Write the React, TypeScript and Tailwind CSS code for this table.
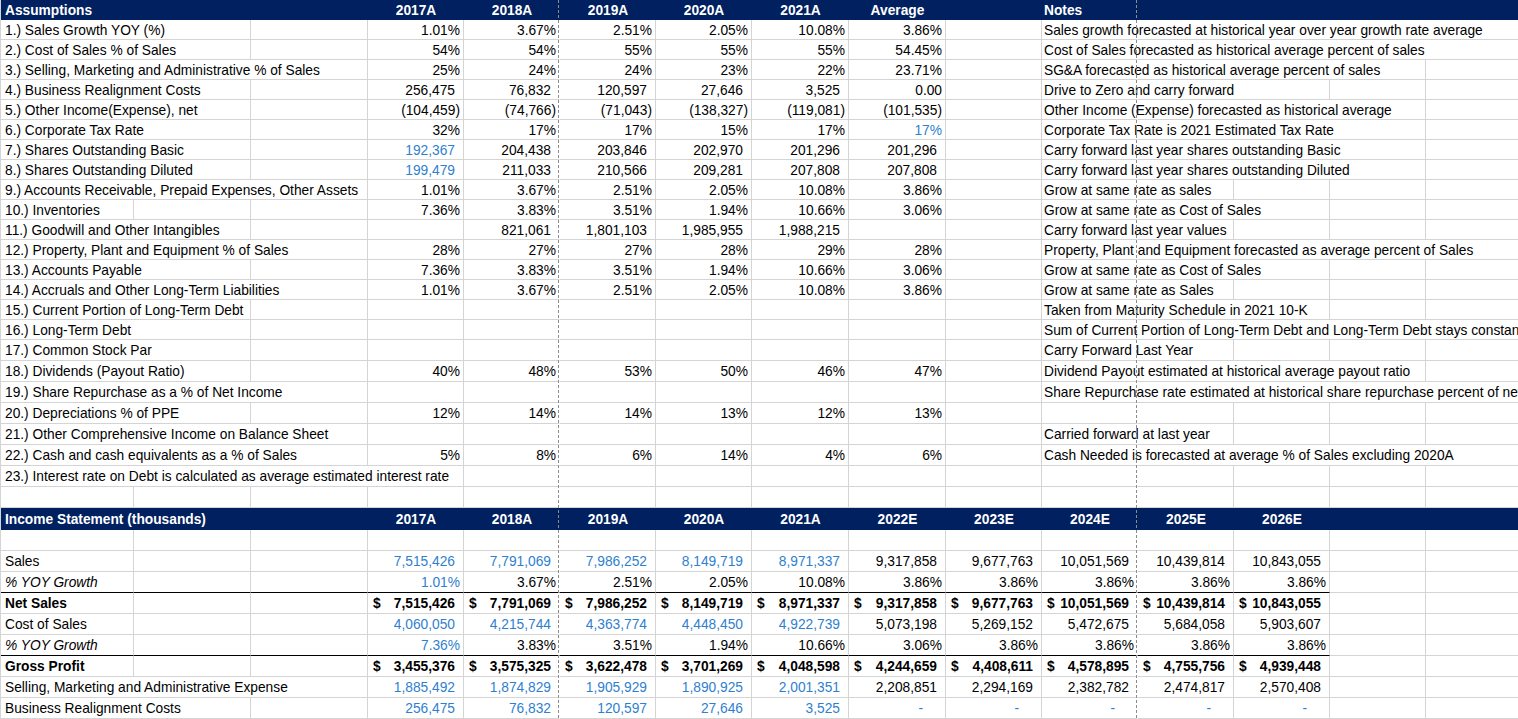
import React from 'react';

// Excel-like sheet: Assumptions block + Income Statement block
const GRID =
  'grid grid-cols-[133px_117px_117px_96px_96px_96px_96px_97px_97px_96px_96px_96px_96px_96px_96px]';
const NCOL = 15;
const BLUE = 'text-[#2f7fcf]';

type Row = { label: string; vals: string[]; note: string; tall?: boolean };

const assumptions: Row[] = [
  { label: '1.) Sales Growth YOY (%)', vals: ['1.01%', '3.67%', '2.51%', '2.05%', '10.08%', '3.86%'], note: 'Sales growth forecasted at historical year over year growth rate average' },
  { label: '2.) Cost of Sales % of Sales', vals: ['54%', '54%', '55%', '55%', '55%', '54.45%'], note: 'Cost of Sales forecasted as historical average percent of sales' },
  { label: '3.) Selling, Marketing and Administrative % of Sales', vals: ['25%', '24%', '24%', '23%', '22%', '23.71%'], note: 'SG&A forecasted as historical average percent of sales' },
  { label: '4.) Business Realignment Costs', vals: ['256,475', '76,832', '120,597', '27,646', '3,525', '0.00'], note: 'Drive to Zero and carry forward' },
  { label: '5.) Other Income(Expense), net', vals: ['(104,459)', '(74,766)', '(71,043)', '(138,327)', '(119,081)', '(101,535)'], note: 'Other Income (Expense) forecasted as historical average' },
  { label: '6.) Corporate Tax Rate', vals: ['32%', '17%', '17%', '15%', '17%', '*17%'], note: 'Corporate Tax Rate is 2021 Estimated Tax Rate' },
  { label: '7.) Shares Outstanding Basic', vals: ['*192,367', '204,438', '203,846', '202,970', '201,296', '201,296'], note: 'Carry forward last year shares outstanding Basic' },
  { label: '8.) Shares Outstanding Diluted', vals: ['*199,479', '211,033', '210,566', '209,281', '207,808', '207,808'], note: 'Carry forward last year shares outstanding Diluted' },
  { label: '9.) Accounts Receivable, Prepaid Expenses, Other Assets', vals: ['1.01%', '3.67%', '2.51%', '2.05%', '10.08%', '3.86%'], note: 'Grow at same rate as sales' },
  { label: '10.) Inventories', vals: ['7.36%', '3.83%', '3.51%', '1.94%', '10.66%', '3.06%'], note: 'Grow at same rate as Cost of Sales' },
  { label: '11.) Goodwill and Other Intangibles', vals: ['', '821,061', '1,801,103', '1,985,955', '1,988,215', ''], note: 'Carry forward last year values' },
  { label: '12.) Property, Plant and Equipment % of Sales', vals: ['28%', '27%', '27%', '28%', '29%', '28%'], note: 'Property, Plant and Equipment forecasted as average percent of Sales' },
  { label: '13.) Accounts Payable', vals: ['7.36%', '3.83%', '3.51%', '1.94%', '10.66%', '3.06%'], note: 'Grow at same rate as Cost of Sales' },
  { label: '14.) Accruals and Other Long-Term Liabilities', vals: ['1.01%', '3.67%', '2.51%', '2.05%', '10.08%', '3.86%'], note: 'Grow at same rate as Sales' },
  { label: '15.) Current Portion of Long-Term Debt', vals: [], note: 'Taken from Maturity Schedule in 2021 10-K' },
  { label: '16.) Long-Term Debt', vals: [], note: 'Sum of Current Portion of Long-Term Debt and Long-Term Debt stays constant' },
  { label: '17.) Common Stock Par', vals: [], note: 'Carry Forward Last Year', tall: true },
  { label: '18.) Dividends (Payout Ratio)', vals: ['40%', '48%', '53%', '50%', '46%', '47%'], note: 'Dividend Payout estimated at historical average payout ratio', tall: true },
  { label: '19.) Share Repurchase as a % of Net Income', vals: [], note: 'Share Repurchase rate estimated at historical share repurchase percent of net income', tall: true },
  { label: '20.) Depreciations % of PPE', vals: ['12%', '14%', '14%', '13%', '12%', '13%'], note: '', tall: true },
  { label: '21.) Other Comprehensive Income on Balance Sheet', vals: [], note: 'Carried forward at last year', tall: true },
  { label: '22.) Cash and cash equivalents as a % of Sales', vals: ['5%', '8%', '6%', '14%', '4%', '6%'], note: 'Cash Needed is forecasted at average % of Sales excluding 2020A', tall: true },
  { label: '23.) Interest rate on Debt is calculated as average estimated interest rate', vals: [], note: '', tall: true },
];

type IsRow = {
  label: string;
  vals: string[];
  blue: number; // how many leading values are hard-coded (blue)
  italic?: boolean;
  bold?: boolean;
  line?: boolean;
};

const income: IsRow[] = [
  { label: 'Sales', vals: ['7,515,426', '7,791,069', '7,986,252', '8,149,719', '8,971,337', '9,317,858', '9,677,763', '10,051,569', '10,439,814', '10,843,055'], blue: 5 },
  { label: '% YOY Growth', vals: ['1.01%', '3.67%', '2.51%', '2.05%', '10.08%', '3.86%', '3.86%', '3.86%', '3.86%', '3.86%'], blue: 1, italic: true, line: true },
  { label: 'Net Sales', vals: ['7,515,426', '7,791,069', '7,986,252', '8,149,719', '8,971,337', '9,317,858', '9,677,763', '10,051,569', '10,439,814', '10,843,055'], blue: 0, bold: true },
  { label: 'Cost of Sales', vals: ['4,060,050', '4,215,744', '4,363,774', '4,448,450', '4,922,739', '5,073,198', '5,269,152', '5,472,675', '5,684,058', '5,903,607'], blue: 5 },
  { label: '% YOY Growth', vals: ['7.36%', '3.83%', '3.51%', '1.94%', '10.66%', '3.06%', '3.86%', '3.86%', '3.86%', '3.86%'], blue: 1, italic: true, line: true },
  { label: 'Gross Profit', vals: ['3,455,376', '3,575,325', '3,622,478', '3,701,269', '4,048,598', '4,244,659', '4,408,611', '4,578,895', '4,755,756', '4,939,448'], blue: 0, bold: true },
  { label: 'Selling, Marketing and Administrative Expense', vals: ['1,885,492', '1,874,829', '1,905,929', '1,890,925', '2,001,351', '2,208,851', '2,294,169', '2,382,782', '2,474,817', '2,570,408'], blue: 5 },
  { label: 'Business Realignment Costs', vals: ['256,475', '76,832', '120,597', '27,646', '3,525', '-', '-', '-', '-', '-'], blue: 10 },
];

// right padding depends on the number format (accounting space for ")")
const padFor = (v: string) => {
  if (v === '-') return 'pr-[22px]';
  if (v.endsWith('%') || v.endsWith(')') || v === '0.00') return 'pr-[3px]';
  return 'pr-[8px]';
};

// page-break columns draw no gridline of their own
const edge = (i: number) => (i === 4 || i === 10 ? 'border-r-transparent' : '');

function Overflow({ text, pad, className = '' }: { text: string; pad: string; className?: string }) {
  return (
    <span className={`relative z-10 h-full flex items-center whitespace-nowrap bg-white pt-[2px] pr-[3px] ${pad} ${className}`}>
      {text}
    </span>
  );
}

function HeaderRow({ title, cols, h, notes }: { title: string; cols: string[]; h: string; notes?: string }) {
  return (
    <div className={`${GRID} ${h} bg-[#002060] font-bold text-white`}>
      <div className="col-span-3 flex items-center pt-[2px] pl-[4px] whitespace-nowrap">{title}</div>
      {cols.map((c) => (
        <div key={c} className="flex items-center justify-center pt-[2px]">
          {c}
        </div>
      ))}
      {notes !== undefined && (
        <>
          {Array.from({ length: 10 - 3 - cols.length }).map((_, i) => (
            <div key={'g' + i} />
          ))}
          <div className="flex items-center pt-[2px] pl-[2px]">{notes}</div>
        </>
      )}
    </div>
  );
}

function BlankRow({ h }: { h: string }) {
  return (
    <div className={`${GRID} ${h}`}>
      {Array.from({ length: NCOL }).map((_, i) => (
        <div key={i} className={`border-b border-r border-[#d4d4d4] ${edge(i)}`} />
      ))}
    </div>
  );
}

function AssumptionRow({ row }: { row: Row }) {
  return (
    <div className={`${GRID} ${row.tall ? 'h-[21px]' : 'h-[20px]'}`}>
      {Array.from({ length: NCOL }).map((_, i) => {
        const base = `border-b border-r border-[#d4d4d4] flex items-center ${edge(i)}`;
        if (i === 0) {
          return (
            <div key={i} className={base}>
              <Overflow text={row.label} pad="pl-[4px]" />
            </div>
          );
        }
        if (i >= 3 && i <= 8) {
          const raw = row.vals[i - 3] || '';
          const blue = raw.startsWith('*');
          const v = blue ? raw.slice(1) : raw;
          return (
            <div key={i} className={`${base} pt-[2px] justify-end ${padFor(v)} ${blue ? BLUE : ''}`}>
              {v}
            </div>
          );
        }
        if (i === 10 && row.note) {
          return (
            <div key={i} className={base}>
              <Overflow text={row.note} pad="pl-[2px]" />
            </div>
          );
        }
        return <div key={i} className={base} />;
      })}
    </div>
  );
}

function IncomeRow({ row }: { row: IsRow }) {
  return (
    <div className={`${GRID} h-[21px] ${row.bold ? 'font-bold' : ''}`}>
      {Array.from({ length: NCOL }).map((_, i) => {
        const bottom = row.line && i < 13 ? 'border-b-black' : '';
        const base = `border-b border-r border-[#d4d4d4] flex items-center ${edge(i)} ${bottom}`;
        if (i === 0) {
          return (
            <div key={i} className={base}>
              <Overflow text={row.label} pad="pl-[4px]" className={row.italic ? 'italic' : ''} />
            </div>
          );
        }
        if (i >= 3 && i <= 12) {
          const k = i - 3;
          const v = row.vals[k];
          const color = k < row.blue ? BLUE : '';
          if (row.bold) {
            return (
              <div key={i} className={`${base} pt-[2px] justify-between pl-[5px] pr-[8px] ${color}`}>
                <span>$</span>
                <span>{v}</span>
              </div>
            );
          }
          return (
            <div key={i} className={`${base} pt-[2px] justify-end ${padFor(v)} ${color}`}>
              {v}
            </div>
          );
        }
        return <div key={i} className={base} />;
      })}
    </div>
  );
}

export default function App() {
  return (
    <div className="w-[1518px] h-[719px] overflow-hidden bg-white text-black font-['Liberation_Sans',Arial,sans-serif] text-[13.75px] leading-none">
      <div className="relative w-[1521px] border-l border-[#d4d4d4]">
        <HeaderRow
          title="Assumptions"
          cols={['2017A', '2018A', '2019A', '2020A', '2021A', 'Average']}
          h="h-[20px]"
          notes="Notes"
        />
        {assumptions.map((r) => (
          <AssumptionRow key={r.label} row={r} />
        ))}
        <BlankRow h="h-[21px]" />
        <HeaderRow
          title="Income Statement (thousands)"
          cols={['2017A', '2018A', '2019A', '2020A', '2021A', '2022E', '2023E', '2024E', '2025E', '2026E']}
          h="h-[22px]"
        />
        <BlankRow h="h-[21px]" />
        {income.map((r, idx) => (
          <IncomeRow key={idx} row={r} />
        ))}

        {/* page break markers */}
        <div className="absolute top-0 bottom-0 left-[557px] w-px z-20 bg-[repeating-linear-gradient(to_bottom,#8c8c8c_0px,#8c8c8c_3px,transparent_3px,transparent_5px)]" />
        <div className="absolute top-0 bottom-0 left-[1135px] w-px z-20 bg-[repeating-linear-gradient(to_bottom,#8c8c8c_0px,#8c8c8c_3px,transparent_3px,transparent_5px)]" />
      </div>
    </div>
  );
}
